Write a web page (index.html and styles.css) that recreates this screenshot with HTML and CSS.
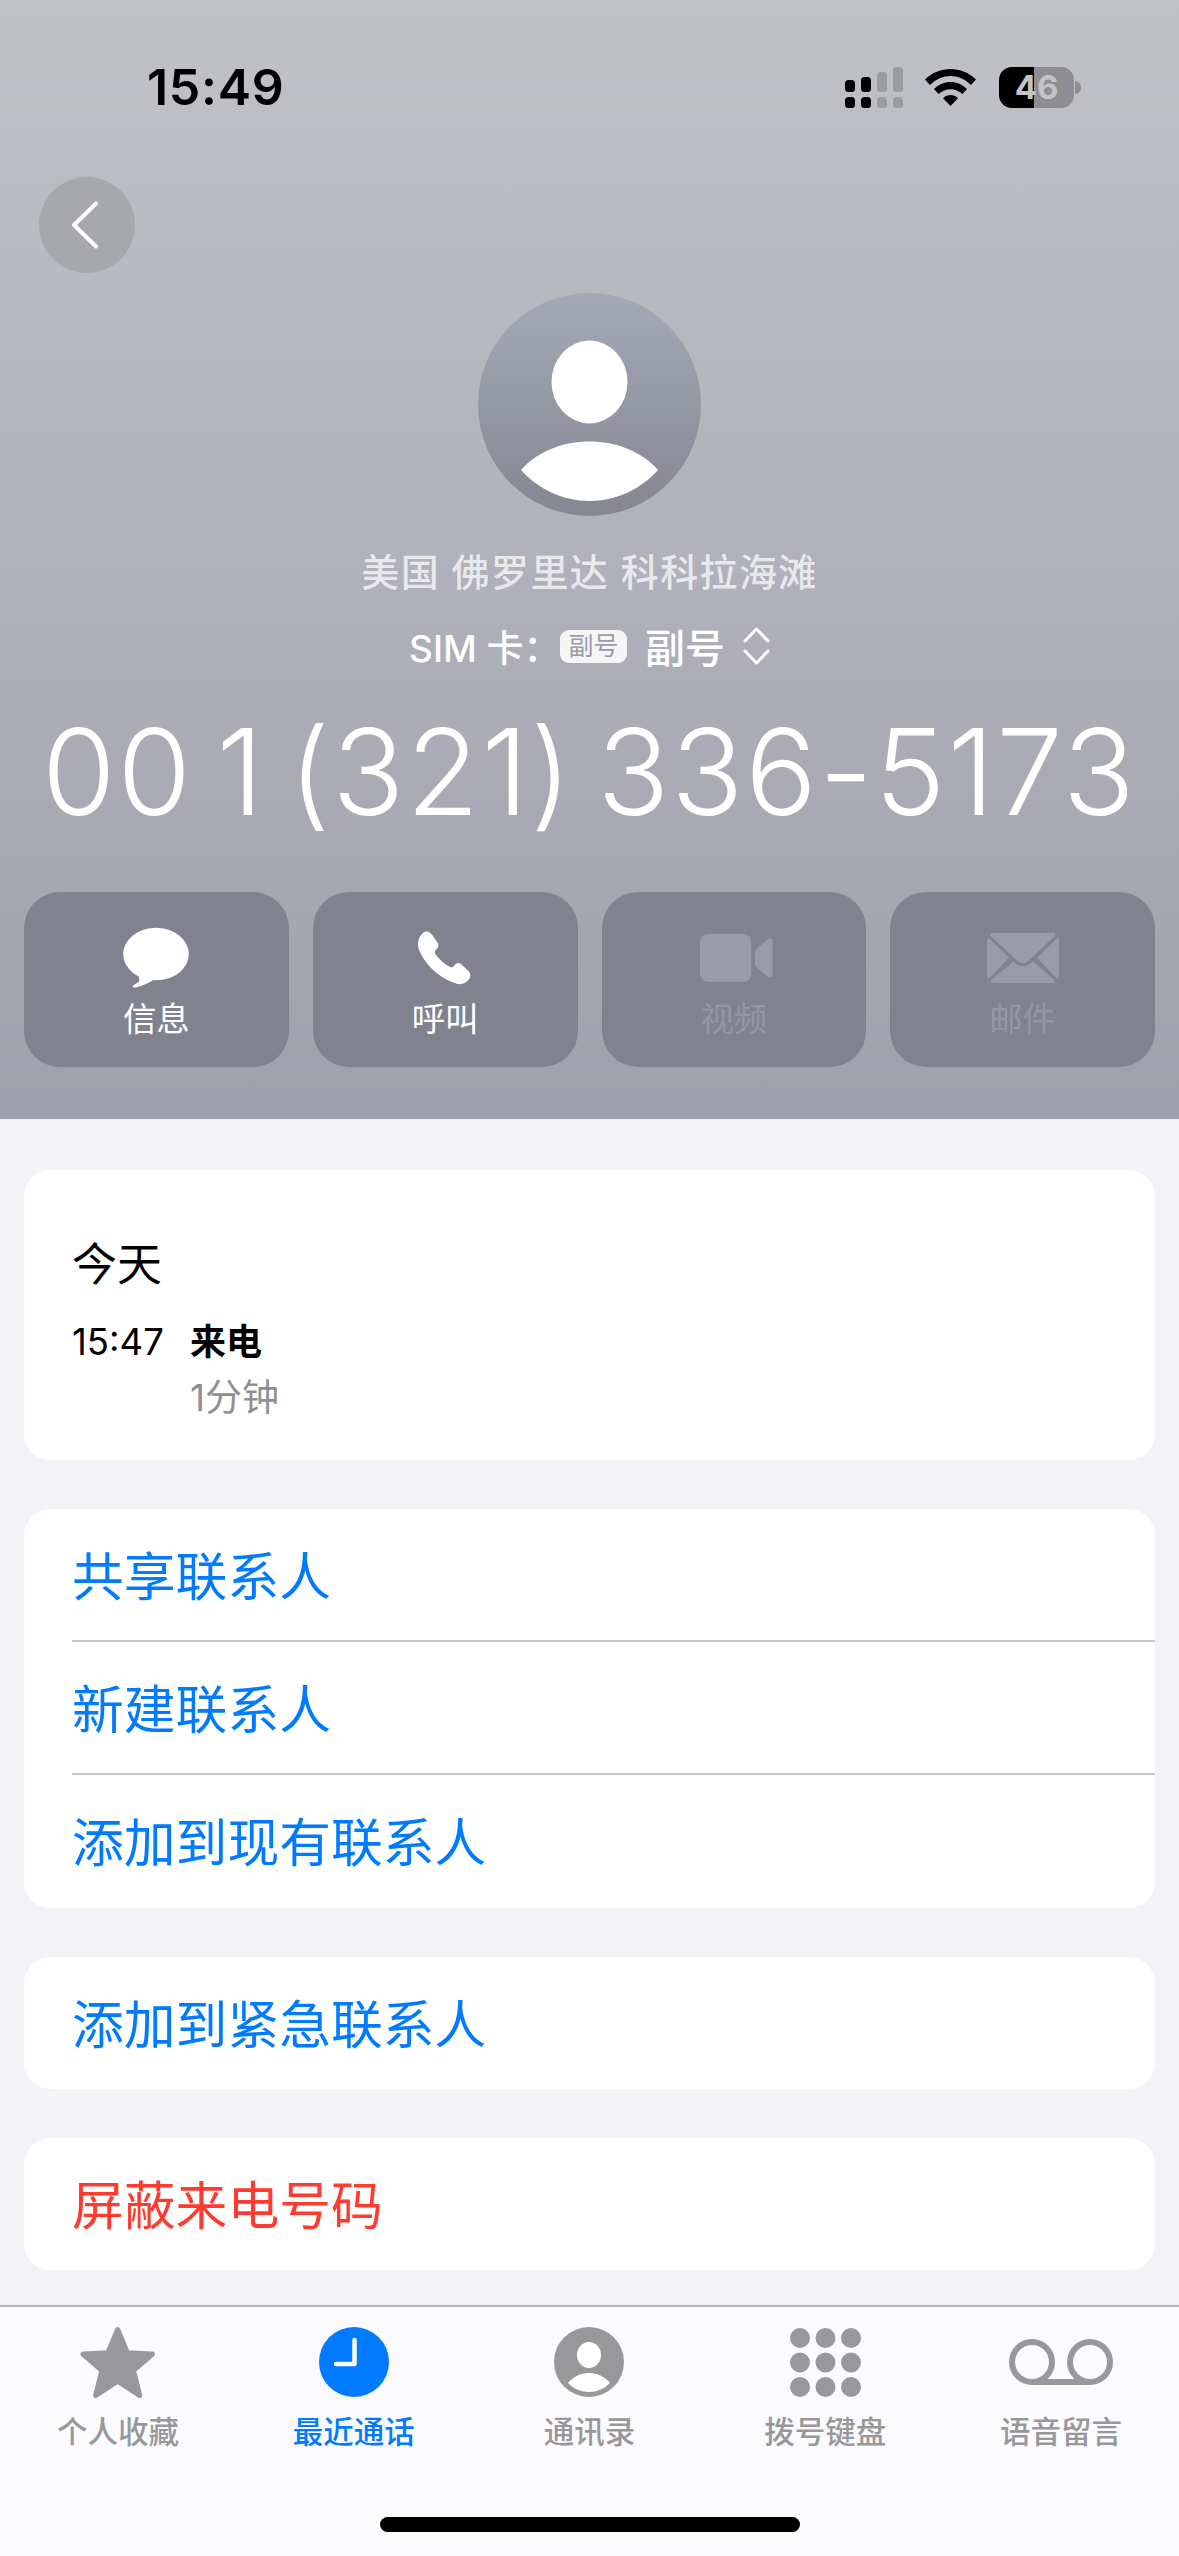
FILE: index.html
```html
<!DOCTYPE html>
<html lang="zh-CN">
<head>
    <meta charset="UTF-8">
    <meta name="viewport" content="width=device-width, initial-scale=1.0">
    <title>通话详情</title>
    <link rel="stylesheet" href="styles.css">
</head>
<body>
<div class="screen">
    <header class="hero">
        <!-- Status bar -->
        <div class="status">
            <span class="clock">15:49</span>
            <div class="status-icons">
                <svg class="signal" width="58" height="41" viewBox="0 0 58 41">
                    <g fill="#000">
                        <rect x="0" y="13" width="10" height="12" rx="3.5"/>
                        <rect x="16" y="10" width="10" height="15" rx="3.5"/>
                        <rect x="0" y="30" width="10" height="11" rx="3.5"/>
                        <rect x="16" y="30" width="10" height="11" rx="3.5"/>
                    </g>
                    <g fill="#9b9c9f">
                        <rect x="32" y="5" width="10" height="20" rx="3.5"/>
                        <rect x="48" y="0" width="10" height="25" rx="3.5"/>
                        <rect x="32" y="30" width="10" height="11" rx="3.5"/>
                        <rect x="48" y="30" width="10" height="11" rx="3.5"/>
                    </g>
                </svg>
                <svg class="wifi" width="51" height="37" viewBox="0 0 51 37">
                    <path d="M0 10.5C14-3.5 37-3.5 51 10.5L46 16C34 4 17 4 5 16Z" fill="#000"/>
                    <path d="M9 20C18 10.500 33 10.500 42 20L37.500 25C30.500 18.500 20.500 18.500 13.500 25Z" fill="#000"/>
                    <path d="M18 29.200C22.500 25 28.500 25 33 29.200L25.500 37Z" fill="#000"/>
                </svg>
                <div class="battery">
                    <div class="battery-body">46</div>
                    <div class="battery-nub"></div>
                </div>
            </div>
        </div>

        <button class="back">
            <svg width="28" height="48" viewBox="0 0 28 48">
                <path d="M25 2.500L3 24L25 45.500" fill="none" stroke="#fff" stroke-width="4" stroke-linecap="round" stroke-linejoin="round"/>
            </svg>
        </button>

        <!-- Contact -->
        <svg class="avatar" width="223" height="223" viewBox="0 0 223 223">
            <defs>
                <linearGradient id="avatarBg" x1="0" y1="0" x2="0" y2="1">
                    <stop offset="0" stop-color="#a5a9b7"/>
                    <stop offset="1" stop-color="#848792"/>
                </linearGradient>
            </defs>
            <circle cx="111.500" cy="111.500" r="111.500" fill="url(#avatarBg)"/>
            <ellipse cx="111.500" cy="89" rx="38" ry="41.500" fill="#fff"/>
            <path d="M43 177C60 158 85 148.500 111.500 148.500C138 148.500 163 158 180 177C163 196 138 208 111.500 208C85 208 60 196 43 177Z" fill="#fff"/>
        </svg>

        <div class="place">美国 佛罗里达 科科拉海滩</div>

        <div class="sim">
            <span class="sim-label">SIM 卡：</span>
            <span class="sim-badge">副号</span>
            <span class="sim-name">副号</span>
            <svg width="27" height="38" viewBox="0 0 27 38">
                <path d="M2 14L13.500 2L25 14M2 24L13.500 36L25 24" fill="none" stroke="#fff" stroke-width="3" stroke-linecap="round" stroke-linejoin="round"/>
            </svg>
        </div>

        <div class="number">00 1 (321) 336-5173</div>

        <!-- Action buttons -->
        <div class="actions">
            <div class="action">
                <svg class="action-icon" width="66" height="62" viewBox="98 50 201 184">
                    <ellipse cx="198.500" cy="130" rx="100" ry="80" fill="#fff"/>
                    <path d="M145 190L148 212C140 220 128 224 127 229C130 238 160 226 192 208Z" fill="#fff"/>
                </svg>
                <span>信息</span>
            </div>
            <div class="action">
                <svg class="action-icon icon-phone" width="54" height="55" viewBox="976 60 166 168">
                    <path d="M1000 63C1010 60 1018 66 1024 75L1040 98C1045 106 1040 113 1033 120C1030 124 1030 128 1034 134C1048 152 1062 164 1078 172C1083 174 1087 172 1090 168C1096 160 1102 157 1110 162L1134 184C1142 192 1142 203 1134 212C1124 223 1112 227 1098 223C1040 205 996 160 980 112C976 92 984 72 1000 63Z" fill="#fff"/>
                </svg>
                <span>呼叫</span>
            </div>
            <div class="action off">
                <svg class="action-icon icon-video" width="73" height="48" viewBox="92 70 218 144">
                    <rect x="92" y="70" width="153" height="143" rx="24" fill="#9a9ba9"/>
                    <path d="M256 128C256 122 258 118 262 114L292 87C299 81 309 84 309 94V190C309 200 299 203 292 197L262 170C258 166 256 162 256 156Z" fill="#9a9ba9"/>
                </svg>
                <span>视频</span>
            </div>
            <div class="action off">
                <svg class="action-icon" width="72" height="50" viewBox="950 65 215 150">
                    <g fill="#9a9ba9">
                        <path d="M968 65H1147C1156 65 1158 70 1151 76L1074 148C1064 158 1050 158 1040 148L963 76C956 70 958 65 968 65Z"/>
                        <path d="M950 88C950 80 954 79 959 84L1016 139L959 198C954 203 950 202 950 194Z"/>
                        <path d="M1165 88C1165 80 1161 79 1156 84L1099 139L1156 198C1161 203 1165 202 1165 194Z"/>
                        <path d="M1028 150L1034 155C1048 168 1066 168 1080 155L1087 150L1150 206C1155 211 1153 215 1146 215H968C961 215 959 211 964 206Z"/>
                    </g>
                </svg>
                <span>邮件</span>
            </div>
        </div>
    </header>

    <main class="content">
        <section class="card history">
            <div class="history-day">今天</div>
            <div class="history-row">
                <span>15:47</span>
                <div>
                    <div class="history-type">来电</div>
                    <div class="history-length">1分钟</div>
                </div>
            </div>
        </section>

        <section class="card">
            <div class="row">共享联系人</div>
            <div class="row">新建联系人</div>
            <div class="row">添加到现有联系人</div>
        </section>

        <section class="card">
            <div class="row">添加到紧急联系人</div>
        </section>

        <section class="card">
            <div class="row danger">屏蔽来电号码</div>
        </section>
    </main>

    <!-- Tab bar -->
    <footer class="tabbar">
        <nav class="tabs">
            <div class="tab">
                <div class="tab-icon">
                    <svg width="80" height="75" viewBox="115 38 240 226">
                        <path d="M234 52L263 122L338 126L281 175L300 250L234 207L168 250L187 175L130 126L205 122Z" fill="#98989b" stroke="#98989b" stroke-width="16" stroke-linejoin="round"/>
                    </svg>
                </div>
                <span>个人收藏</span>
            </div>
            <div class="tab active">
                <div class="tab-icon">
                    <svg width="70" height="70" viewBox="0 0 70 70">
                        <circle cx="35" cy="35" r="35" fill="#007aff"/>
                        <path d="M35.500 13V37H17" fill="none" stroke="#fff" stroke-width="4.500" stroke-linecap="round" stroke-linejoin="round"/>
                    </svg>
                </div>
                <span>最近通话</span>
            </div>
            <div class="tab">
                <div class="tab-icon">
                    <svg width="70" height="70" viewBox="0 0 70 70">
                        <circle cx="35" cy="35" r="35" fill="#98989b"/>
                        <ellipse cx="35" cy="28" rx="12" ry="13" fill="#fff"/>
                        <path d="M14 56C19 50 26 46 35 46C44 46 51 50 56 56C50 62 43 65 35 65C27 65 20 62 14 56Z" fill="#fff"/>
                    </svg>
                </div>
                <span>通讯录</span>
            </div>
            <div class="tab">
                <div class="tab-icon">
                    <svg width="71" height="69" viewBox="0 0 71 69" fill="#98989b">
                        <circle cx="10" cy="10" r="10"/><circle cx="35.500" cy="10" r="10"/><circle cx="61" cy="10" r="10"/>
                        <circle cx="10" cy="34.500" r="10"/><circle cx="35.500" cy="34.500" r="10"/><circle cx="61" cy="34.500" r="10"/>
                        <circle cx="10" cy="59" r="10"/><circle cx="35.500" cy="59" r="10"/><circle cx="61" cy="59" r="10"/>
                    </svg>
                </div>
                <span>拨号键盘</span>
            </div>
            <div class="tab">
                <div class="tab-icon">
                    <svg width="104" height="46" viewBox="0 0 104 46" fill="none" stroke="#98989b" stroke-width="6">
                        <circle cx="23" cy="23" r="20"/>
                        <circle cx="81" cy="23" r="20"/>
                        <path d="M23 43H81"/>
                    </svg>
                </div>
                <span>语音留言</span>
            </div>
        </nav>
        <div class="home-bar"></div>
    </footer>
</div>
</body>
</html>
```

FILE: styles.css
```css
/* Page */
* {
    box-sizing: border-box;
}

body {
    margin: 0;
    background-color: #f2f2f7;
    font-family: Inter, "Noto Sans CJK SC", sans-serif;
    color: #000;
}

.screen {
    width: 1179px;
    height: 2556px;
    display: flex;
    flex-direction: column;
    overflow: hidden;
}

/* Header */
.hero {
    height: 1119px;
    display: flex;
    flex-direction: column;
    background: linear-gradient(#c1c2c6, #9fa0ad);
    flex-shrink: 0;
}

.status {
    display: flex;
    justify-content: space-between;
    align-items: center;
    height: 41px;
    margin-top: 67px;
    padding: 0 98px 0 147px;
}

.clock {
    font-size: 50px;
    font-weight: 600;
    line-height: 41px;
    letter-spacing: 0.7px;
}

.status-icons {
    display: flex;
    align-items: center;
}

.signal {
    margin-right: 22px;
}

.wifi {
    margin-right: 22px;
}

.battery {
    display: flex;
    align-items: center;
}

.battery-body {
    width: 75px;
    height: 41px;
    margin-left: 1px;
    border-radius: 13px;
    background: linear-gradient(90deg, #000 35px, #8e8e92 35px);
    color: #c3c4c8;
    font-size: 33px;
    font-weight: 700;
    line-height: 41px;
    text-align: center;
}

.battery-nub {
    width: 6px;
    height: 13px;
    margin-left: 1px;
    border-radius: 0 7px 7px 0;
    background-color: #8e8e92;
}

.back {
    width: 96px;
    height: 96px;
    margin: 69px 0 0 39px;
    padding: 0;
    border: none;
    border-radius: 50%;
    background-color: #a7a8ac;
    display: flex;
    align-items: center;
    justify-content: center;
}

.back svg {
    margin-right: 5px;
}

.avatar {
    display: block;
    margin: 20px auto 0;
    flex-shrink: 0;
}

.place {
    margin-top: 31px;
    font-size: 38px;
    font-weight: 500;
    line-height: 50px;
    letter-spacing: 1.4px;
    text-align: center;
    color: rgba(255, 255, 255, 0.72);
}

.sim {
    display: flex;
    align-items: center;
    justify-content: center;
    height: 50px;
    margin-top: 24px;
    color: #fff;
    font-size: 37px;
    font-weight: 500;
}

.sim-label {
    width: 151px;
    white-space: nowrap;
}

.sim-badge {
    width: 67px;
    height: 33px;
    border-radius: 9px;
    background-color: #f5f5f6;
    color: #9a9ca8;
    font-size: 25px;
    font-weight: 400;
    line-height: 33px;
    text-align: center;
}

.sim-name {
    margin: 0 18px;
    font-size: 40px;
}

.number {
    margin-top: 26px;
    font-size: 119px;
    font-weight: 360;
    line-height: 150px;
    letter-spacing: 2px;
    word-spacing: -12px;
    text-align: center;
    color: #fff;
    white-space: nowrap;
}

.actions {
    display: grid;
    grid-template-columns: repeat(4, 1fr);
    gap: 24px;
    margin-top: 45px;
    padding: 0 24px;
}

.action {
    height: 175px;
    border-radius: 36px;
    background-color: #80828f;
    color: #fff;
    font-size: 33.500px;
    display: flex;
    flex-direction: column;
    align-items: center;
}

.action-icon {
    height: 62px;
    margin-top: 35px;
}

.icon-phone {
    margin-right: 3px;
}

.icon-video {
    margin-left: 6px;
}

.action span {
    margin-top: 10px;
    line-height: 40px;
}

.off {
    color: #9496a3;
}

/* Lists */
.content {
    display: flex;
    flex-direction: column;
    gap: 49px;
    padding: 51px 24px 0;
}

.card {
    background-color: #fff;
    border-radius: 26px;
}

.history {
    height: 290px;
    padding: 65px 48px 0;
}

.history-day {
    font-size: 45px;
    line-height: 60px;
}

.history-row {
    display: grid;
    grid-template-columns: 118px 1fr;
    margin-top: 25px;
    font-size: 36.500px;
    line-height: 44px;
}

.history-type {
    font-size: 36px;
    font-weight: 700;
}

.history-length {
    margin-top: 12px;
    font-size: 37px;
    color: #8e8e93;
}

.row {
    height: 133px;
    margin-left: 48px;
    padding-top: 5px;
    border-bottom: 2px solid #c9c9cb;
    color: #007aff;
    font-size: 51.800px;
    line-height: 127px;
}

.row:last-child {
    border-bottom: none;
}

.row:only-child {
    height: 132px;
}

.danger {
    color: #ff3b30;
}

/* Tab bar */
.tabbar {
    height: 251px;
    margin-top: auto;
    border-top: 2px solid #b4b4b6;
    background-color: #fbfbfd;
}

.tabs {
    display: grid;
    grid-template-columns: repeat(5, 1fr);
    padding-top: 13px;
}

.tab {
    display: flex;
    flex-direction: column;
    align-items: center;
    color: #98989b;
    font-size: 30.500px;
    font-weight: 500;
    line-height: 40px;
}

.tab-icon {
    height: 84px;
    display: flex;
    align-items: center;
    justify-content: center;
}

.tab span {
    margin-top: 8px;
}

.active {
    color: #007aff;
}

.home-bar {
    width: 420px;
    height: 15px;
    margin: 65px auto 0;
    border-radius: 8px;
    background-color: #000;
}
```
